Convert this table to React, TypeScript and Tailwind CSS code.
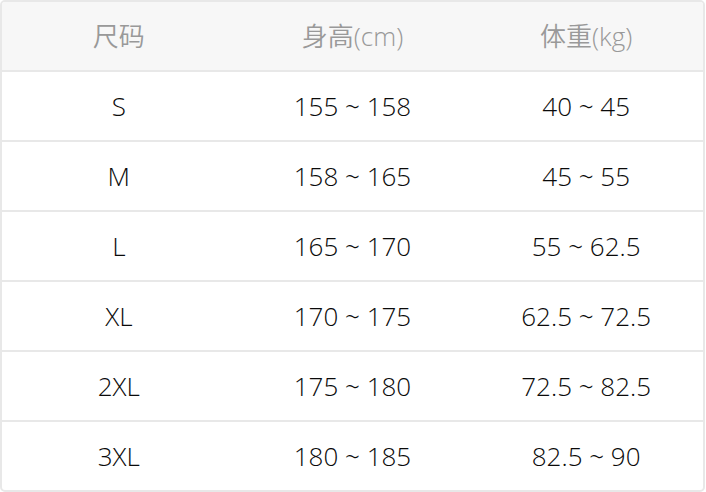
import React from "react";

const rows = [
  ["S", "155 ~ 158", "40 ~ 45"],
  ["M", "158 ~ 165", "45 ~ 55"],
  ["L", "165 ~ 170", "55 ~ 62.5"],
  ["XL", "170 ~ 175", "62.5 ~ 72.5"],
  ["2XL", "175 ~ 180", "72.5 ~ 82.5"],
  ["3XL", "180 ~ 185", "82.5 ~ 90"],
];

export default function App() {
  return (
    <div
      className="w-[706px] h-[492px] bg-white"
      style={{ fontFamily: '"Open Sans", "Noto Sans CJK SC", sans-serif' }}
    >
      <div className="w-[705px] border-2 border-[#e8e8e8] rounded-[5px] overflow-hidden">
        <div className="grid grid-cols-3 h-[68px] items-center bg-[#f7f7f7] text-[#999999] text-[26px] text-center font-[350]">
          <div>尺码</div>
          <div>身高(cm)</div>
          <div>体重(kg)</div>
        </div>
        {rows.map((r) => (
          <div
            key={r[0]}
            className="grid grid-cols-3 h-[70px] items-center border-t-2 border-[#e8e8e8] text-[#0a0a0a] text-[26px] text-center font-[350]"
          >
            <div>{r[0]}</div>
            <div>{r[1]}</div>
            <div>{r[2]}</div>
          </div>
        ))}
      </div>
    </div>
  );
}
